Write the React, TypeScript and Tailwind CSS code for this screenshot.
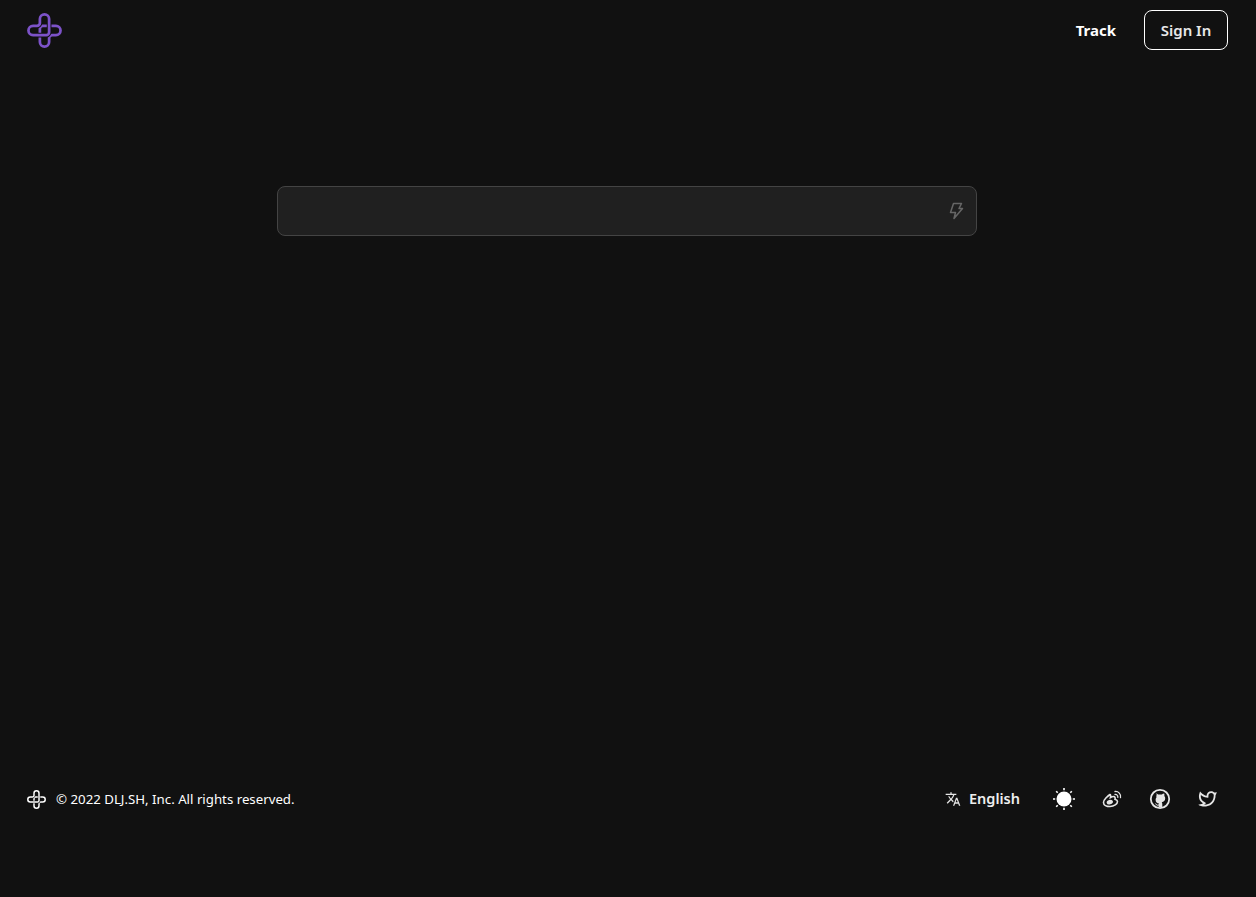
import { MdTranslate } from "react-icons/md";
import { RiTwitterLine } from "react-icons/ri";

const fontClass = "font-['Noto_Sans','Open_Sans',sans-serif]";

function Logo({ className }: { className: string }) {
  const front = "M13.25 6.25a4.75 4.75 0 0 1 9.5 0V19.75a3 3 0 0 1-3 3H6.25a4.75 4.75 0 0 1 0-9.5h4a3 3 0 0 0 3-3z";
  return (
    <svg className={className} viewBox="0 0 36 36" fill="none" stroke="currentColor" strokeWidth="2.8">
      <path d="M22.75 29.75a4.75 4.75 0 0 1-9.5 0V16.25a3 3 0 0 1 3-3H29.75a4.75 4.75 0 0 1 0 9.5h-4a3 3 0 0 0-3 3z" />
      {/* wider dark stroke cuts the gap where the loops cross */}
      <path d={front} stroke="#111111" strokeWidth="4.8" />
      <path d={front} />
    </svg>
  );
}

function Bolt() {
  return (
    <svg className="h-[18px] w-[18px] text-[#666666]" viewBox="0 0 18 18" fill="none" stroke="currentColor" strokeWidth="1.5" strokeLinejoin="round">
      <path d="M6.5 1.5h8l-2.5 5h3.5L7 16.5l1.5-6H3.5z" />
    </svg>
  );
}

function Sun() {
  return (
    <svg className="h-[22px] w-[22px] text-white" viewBox="0 0 22 22" fill="currentColor" stroke="currentColor" strokeWidth="1.6">
      <circle cx="11" cy="11" r="7.5" stroke="none" />
      <path d="M11 0v2.2M11 19.8V22M0 11h2.2M19.8 11H22M3.2 3.2l1.5 1.5M17.3 17.3l1.5 1.5M3.2 18.8l1.5-1.5M17.3 4.7l1.5-1.5" />
    </svg>
  );
}

function Weibo() {
  return (
    <svg className="h-5 w-5 text-[#e5e5e5]" viewBox="0 0 20 20" fill="none" stroke="currentColor" strokeWidth="1.6" strokeLinecap="round">
      <path d="M8.5 5.5C5.5 7 1.5 10.5 1.5 13.5c0 2.5 3 4 6.5 4 4 0 7.5-2.5 7.5-5 0-1.5-1.5-2-2.5-2.3.5-1.5 0-2.7-1.5-2.7-1 0-2.2.5-3 1 .5-2-.2-3.2-.5-3z" />
      <ellipse cx="7.8" cy="13.2" rx="3.2" ry="2.2" fill="currentColor" stroke="none" transform="rotate(-15 7.8 13.2)" />
      <path d="M13 2.5a5 5 0 0 1 5.5 6M13 5.5a2.4 2.4 0 0 1 2.8 2.8" strokeWidth="1.3" />
    </svg>
  );
}

function Github() {
  return (
    <svg className="h-[22px] w-[22px] text-[#e5e5e5]" viewBox="0 0 22 22" fill="currentColor">
      <circle cx="11" cy="11" r="9.2" fill="none" stroke="currentColor" strokeWidth="1.8" />
      <path d="M6.8 5.6c.9 0 1.7.5 2.3 1 1.2-.3 2.6-.3 3.8 0 .6-.5 1.4-1 2.3-1 .3.8.3 1.6.1 2.3.6.7.9 1.5.9 2.4 0 2.6-1.5 3.6-3.5 3.9.4.4.6 1 .6 1.7v3.3H9.6v-1.6c-1.6.3-2.5-.4-3-1.4-.2-.4-.5-.7-.9-.9.7-.1 1.3.2 1.7.8.4.6 1 .8 2.2.5.1-.4.2-.7.5-1-2-.3-3.5-1.3-3.5-3.9 0-.9.3-1.7.9-2.4-.2-.7-.2-1.5.3-2.7z" />
    </svg>
  );
}

export default function App() {
  return (
    <div className={`flex min-h-screen flex-col bg-[#111111] text-white ${fontClass}`}>
      <header className="flex h-[60px] items-center justify-between pl-[27px] pr-[28px]">
        <Logo className="h-[35px] w-[35px] text-[#7c52c8]" />
        <nav className="flex items-center gap-7">
          <a className="text-[15px] font-bold">Track</a>
          <button className="h-10 w-[84px] rounded-lg border border-white text-[15px] font-semibold text-[#e8e8e8]" type="button">
            Sign In
          </button>
        </nav>
      </header>

      <main className="flex flex-1 justify-center pt-[126px]">
        <div className="mr-[2px] flex h-[50px] w-[700px] items-center justify-end rounded-lg border border-[#444444] bg-[#202020] pr-[11px]">
          <Bolt />
        </div>
      </main>

      <footer className="mb-[74px] flex h-12 items-center justify-between pl-[27px] pr-6">
        <div className="flex items-center gap-[10px] text-[13.25px]">
          <Logo className="h-[19px] w-[19px] text-white" />
          <span className="translate-y-px">© 2022 DLJ.SH, Inc. All rights reserved.</span>
        </div>
        <div className="flex items-center">
          <div className="mr-5 flex items-center gap-2">
            <MdTranslate className="h-4 w-4 text-[#e5e5e5]" />
            <span className="text-[14.5px] font-semibold text-[#eeeeee]">English</span>
          </div>
          <div className="flex h-12 w-12 items-center justify-center"><Sun /></div>
          <div className="flex h-12 w-12 items-center justify-center"><Weibo /></div>
          <div className="flex h-12 w-12 items-center justify-center"><Github /></div>
          <div className="flex h-12 w-12 items-center justify-center"><RiTwitterLine className="h-[22px] w-[22px] text-[#e5e5e5]" /></div>
        </div>
      </footer>
    </div>
  );
}
